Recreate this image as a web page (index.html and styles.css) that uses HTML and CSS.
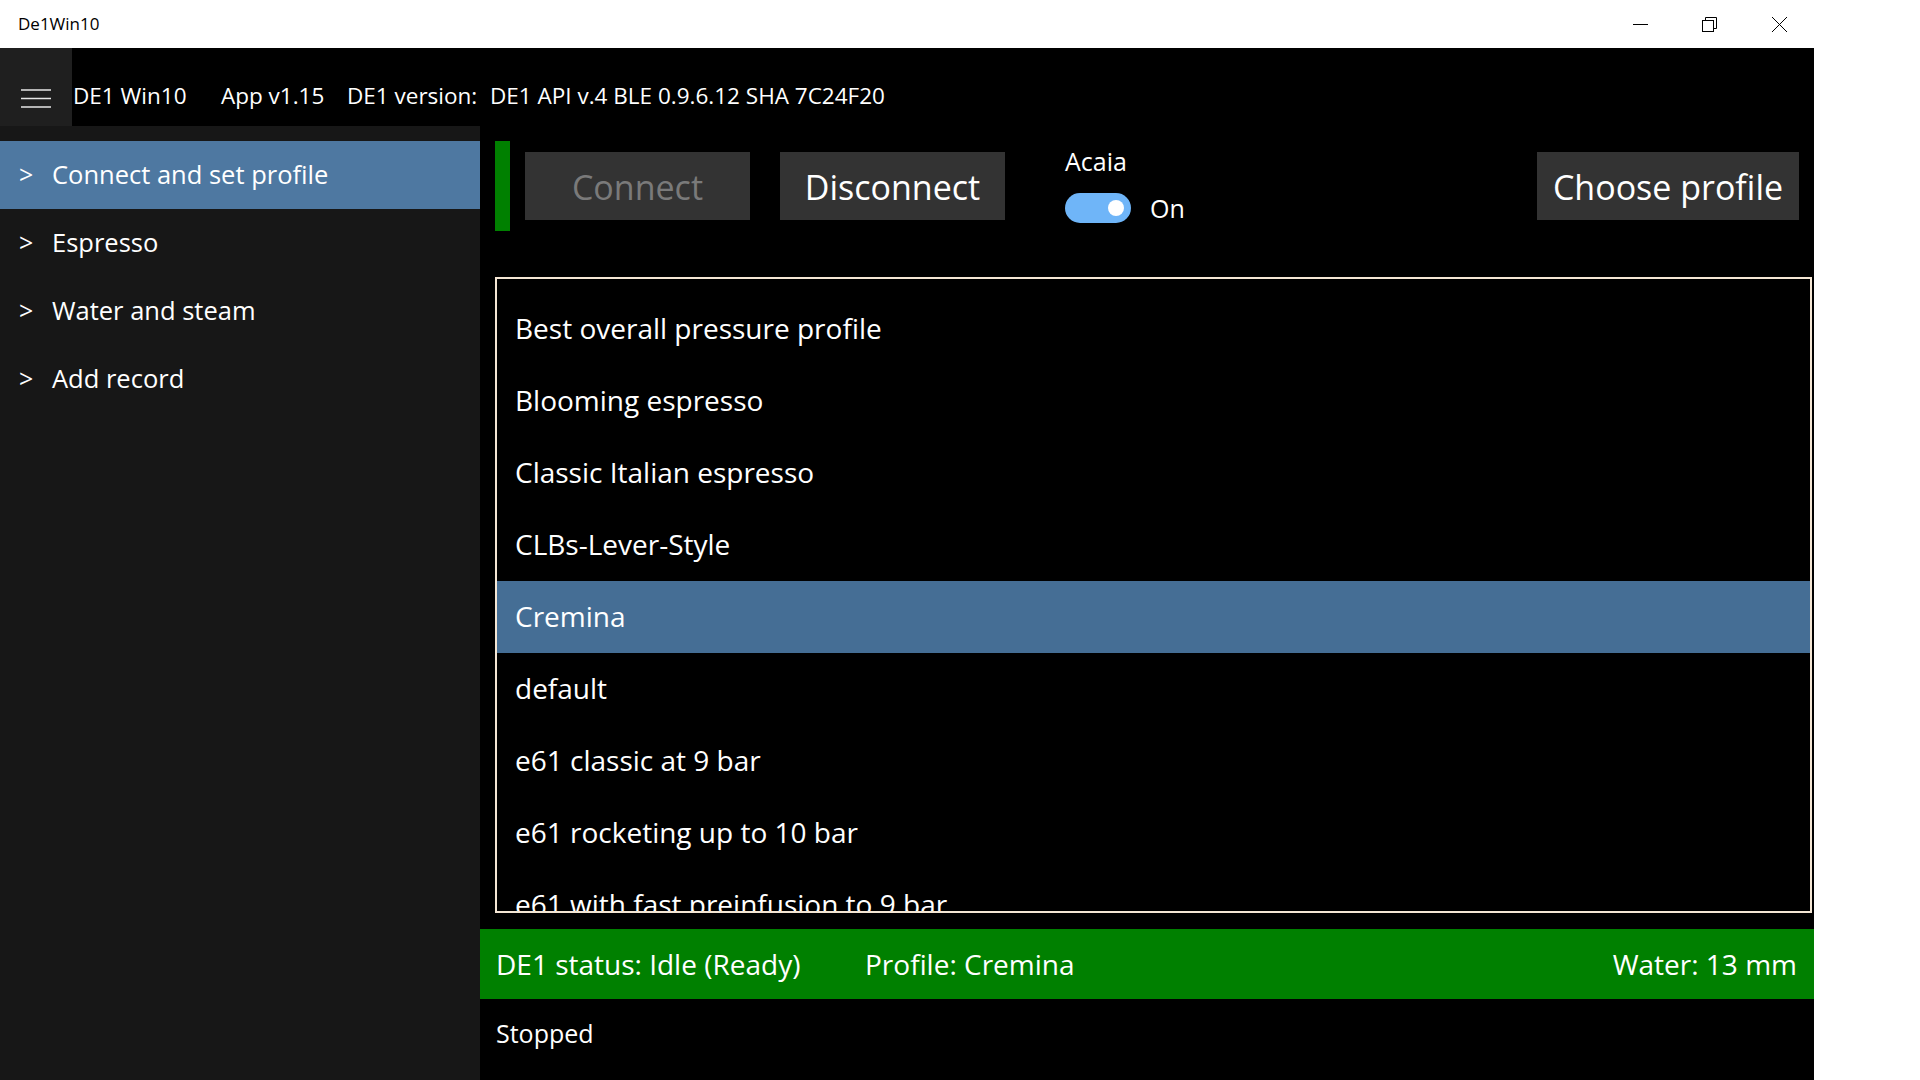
FILE: index.html
```html
<!DOCTYPE html>
<html lang="en">
<head>
<meta charset="utf-8">
<title>De1Win10</title>
<link rel="stylesheet" href="styles.css">
</head>
<body>
<div class="window">
  <div class="titlebar">
    <div class="title">De1Win10</div>
    <div class="caption-buttons">
      <div class="cap-btn">
        <svg width="15" height="15" viewBox="0 0 15 15"><line x1="0" y1="7.5" x2="15" y2="7.5" stroke="#000" stroke-width="1"/></svg>
      </div>
      <div class="cap-btn">
        <svg width="15" height="15" viewBox="0 0 15 15"><rect x="0.5" y="3.5" width="11" height="11" fill="none" stroke="#000" stroke-width="1"/><path d="M3.5 3.5 V0.5 H14.5 V11.5 H11.5" fill="none" stroke="#000" stroke-width="1"/></svg>
      </div>
      <div class="cap-btn cap-close">
        <svg width="15" height="15" viewBox="0 0 15 15"><path d="M0 0 L15 15 M15 0 L0 15" stroke="#000" stroke-width="1"/></svg>
      </div>
    </div>
  </div>

  <div class="app">
    <div class="header">
      <div class="hamburger">
        <svg width="30" height="20" viewBox="0 0 30 20"><path d="M0 1 H30 M0 9.5 H30 M0 18 H30" stroke="#e6e6e6" stroke-width="1.6"/></svg>
      </div>
      <div class="header-text">
        <span class="h-name">DE1 Win10</span><span class="h-app">App v1.15</span><span class="h-ver">DE1 version:</span><span class="h-api">DE1 API v.4 BLE 0.9.6.12 SHA 7C24F20</span>
      </div>
    </div>

    <div class="body">
      <nav class="nav">
        <div class="nav-item selected"><span class="chev">&gt;</span>Connect and set profile</div>
        <div class="nav-item"><span class="chev">&gt;</span>Espresso</div>
        <div class="nav-item"><span class="chev">&gt;</span>Water and steam</div>
        <div class="nav-item"><span class="chev">&gt;</span>Add record</div>
      </nav>

      <main class="main">
        <div class="toolbar">
          <div class="conn-indicator"></div>
          <div class="btn btn-connect disabled">Connect</div>
          <div class="btn btn-disconnect">Disconnect</div>
          <div class="scale">
            <div class="scale-label">Acaia</div>
            <div class="toggle-row">
              <div class="toggle"><div class="knob"></div></div>
              <span class="toggle-text">On</span>
            </div>
          </div>
          <div class="btn btn-profile">Choose profile</div>
        </div>

        <div class="profile-list">
          <div class="row">Best overall pressure profile</div>
          <div class="row">Blooming espresso</div>
          <div class="row">Classic Italian espresso</div>
          <div class="row">CLBs-Lever-Style</div>
          <div class="row selected">Cremina</div>
          <div class="row">default</div>
          <div class="row">e61 classic at 9 bar</div>
          <div class="row">e61 rocketing up to 10 bar</div>
          <div class="row">e61 with fast preinfusion to 9 bar</div>
        </div>

        <div class="statusbar">
          <span class="st-status">DE1 status: Idle (Ready)</span>
          <span class="st-profile">Profile: Cremina</span>
          <span class="st-water">Water: 13 mm</span>
        </div>

        <div class="stopped">Stopped</div>
      </main>
    </div>
  </div>
</div>
</body>
</html>
```

FILE: styles.css
```css
html, body {
  margin: 0;
  padding: 0;
  background: #ffffff;
  overflow: hidden;
}

body {
  font-family: "Open Sans", "Noto Sans", sans-serif;
  width: 1920px;
  height: 1080px;
}

.window {
  width: 1814px;
  height: 1080px;
  display: flex;
  flex-direction: column;
}

/* Title bar */
.titlebar {
  height: 48px;
  flex: 0 0 48px;
  display: flex;
  align-items: stretch;
  background: #ffffff;
}

.title {
  font-size: 17px;
  line-height: 48px;
  color: #000000;
  padding-left: 18px;
  flex: 1;
}

.caption-buttons {
  display: flex;
}

.cap-btn {
  width: 69px;
  height: 48px;
  display: flex;
  align-items: center;
  justify-content: center;
}

.cap-btn svg {
  display: block;
}

.cap-close {
  width: 70px;
}

/* App */
.app {
  flex: 1;
  display: flex;
  flex-direction: column;
  background: #000000;
  color: #ffffff;
  min-height: 0;
}

.header {
  height: 78px;
  flex: 0 0 78px;
  display: flex;
}

.hamburger {
  width: 72px;
  background: #1f1f1f;
  display: flex;
  justify-content: center;
  align-items: flex-start;
  padding-top: 41px;
  box-sizing: border-box;
}

.hamburger svg {
  display: block;
}

.header-text {
  display: flex;
  align-items: flex-start;
  font-size: 22.5px;
  line-height: 30px;
  padding-top: 33px;
  padding-left: 1px;
  white-space: nowrap;
}

.header-text span {
  display: inline-block;
}

.h-name { width: 148px; }
.h-app { width: 126px; }
.h-ver { width: 143px; }

.body {
  flex: 1;
  display: flex;
  min-height: 0;
}

/* Navigation */
.nav {
  width: 480px;
  flex: 0 0 480px;
  background: #171717;
  padding-top: 15px;
  box-sizing: border-box;
}

.nav-item {
  height: 68px;
  line-height: 66px;
  font-size: 25.5px;
  color: #ffffff;
  white-space: nowrap;
  display: flex;
}

.nav-item.selected {
  background: #4e78a1;
}

.chev {
  width: 33px;
  padding-left: 19px;
  font-size: 25px;
}

/* Main content */
.main {
  flex: 1;
  display: flex;
  flex-direction: column;
  min-width: 0;
}

.toolbar {
  display: flex;
  align-items: flex-start;
  padding: 15px 15px 0 15px;
}

.conn-indicator {
  width: 15px;
  height: 90px;
  background: #008000;
}

.btn {
  height: 68px;
  line-height: 71px;
  font-size: 34px;
  text-align: center;
  background: #333333;
  color: #ffffff;
  margin-top: 11px;
  white-space: nowrap;
  overflow: hidden;
}

.btn-connect {
  width: 225px;
  margin-left: 15px;
}

.btn.disabled {
  color: #7a7a7a;
}

.btn-disconnect {
  width: 225px;
  margin-left: 30px;
}

.btn-profile {
  width: 262px;
  margin-left: auto;
}

.scale {
  margin-left: 60px;
  display: flex;
  flex-direction: column;
}

.scale-label {
  font-size: 25px;
  line-height: 32px;
  margin-top: 4px;
}

.toggle-row {
  display: flex;
  align-items: center;
  margin-top: 15px;
}

.toggle {
  width: 66px;
  height: 30px;
  border-radius: 15px;
  background: #6fb5f8;
  display: flex;
  align-items: center;
  justify-content: flex-end;
  padding-right: 7px;
  box-sizing: border-box;
}

.knob {
  width: 16px;
  height: 16px;
  border-radius: 50%;
  background: #ffffff;
}

.toggle-text {
  margin-left: 19px;
  font-size: 25px;
  line-height: 32px;
}

/* Profile list */
.profile-list {
  margin: 46px 2px 0 15px;
  height: 636px;
  flex: 0 0 636px;
  box-sizing: border-box;
  border: 2px solid #f4e6d4;
  padding-top: 14px;
  overflow: hidden;
}

.row {
  height: 72px;
  line-height: 70px;
  font-size: 28px;
  padding-left: 18px;
  white-space: nowrap;
  color: #ffffff;
}

.row.selected {
  background: #456e95;
}

/* Status bar */
.statusbar {
  margin-top: 16px;
  height: 70px;
  flex: 0 0 70px;
  background: #008000;
  display: flex;
  align-items: center;
  font-size: 28px;
  line-height: 72px;
  padding: 0 17px 0 16px;
  white-space: nowrap;
}

.st-status {
  width: 369px;
}

.st-water {
  margin-left: auto;
}

.stopped {
  margin-top: 17px;
  padding-left: 16px;
  font-size: 25px;
  line-height: 34px;
}
```
